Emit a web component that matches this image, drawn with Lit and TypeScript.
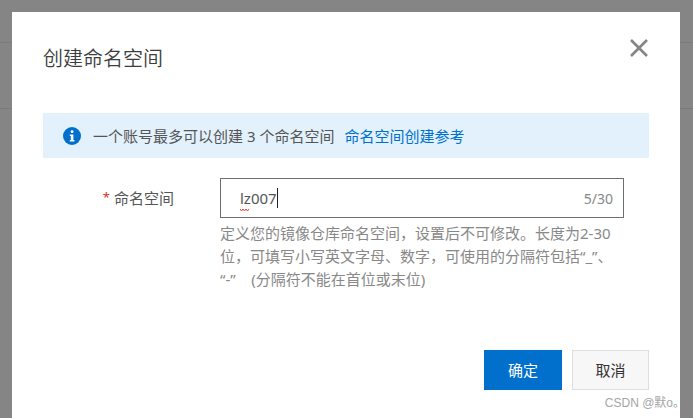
import { LitElement, html, css } from "lit";
import { customElement } from "lit/decorators.js";

@customElement("app-root")
export class AppRoot extends LitElement {
  static styles = css`
    :host {
      display: block;
      position: relative;
      width: 693px;
      height: 418px;
      overflow: hidden;
      background: #858585;
      font-family: "Noto Sans", "Noto Sans CJK SC", sans-serif;
    }
    .bg-head { height: 43px; box-sizing: border-box; border-bottom: 1px solid #7b7b7b; }
    .bg-sec { height: 66px; box-sizing: border-box; border-bottom: 1px solid #7b7b7b; }
    .modal {
      position: absolute;
      left: 12px;
      top: 12px;
      width: 668px;
      height: 406px;
      box-sizing: border-box;
      background: #fff;
      padding: 0 31px;
      display: flex;
      flex-direction: column;
    }
    .head {
      height: 101px;
      flex: none;
      display: flex;
      justify-content: space-between;
      align-items: flex-start;
    }
    .title {
      margin-top: 32px;
      font-size: 20px;
      line-height: 28px;
      color: #3d3d3d;
      font-family: "Noto Sans CJK SC", sans-serif;
      font-weight: 350;
    }
    .close { margin: 26px 0 0 0; width: 20px; height: 20px; display: block; }
    .alert {
      height: 45px;
      flex: none;
      background: #e3f1fd;
      display: flex;
      align-items: center;
      padding-left: 20px;
      font-size: 15px;
      color: #555;
      white-space: nowrap;
    }
    .info { width: 18px; height: 18px; margin-right: 12px; flex: none; }
    .link { color: #0070cc; margin-left: 10px; }
    .form {
      display: flex;
      margin-top: 20px;
      flex: none;
    }
    .label {
      width: 177px;
      height: 38px;
      flex: none;
      box-sizing: border-box;
      display: flex;
      align-items: center;
      justify-content: flex-end;
      padding-right: 46px;
      font-size: 15px;
      color: #555;
    }
    .req { color: #d93026; margin-right: 4px; font-size: 13px; }
    .field { width: 404px; }
    .input {
      height: 40px;
      box-sizing: border-box;
      border: 1px solid #6f6f6f;
      display: flex;
      align-items: center;
      justify-content: space-between;
      padding: 0 10px 0 19px;
      font-size: 15px;
      color: #555;
    }
    .value { position: relative; display: flex; align-items: center; }
    .caret { width: 1px; height: 20px; background: #222; margin-left: 0; }
    .squiggle { position: absolute; left: 0; top: 20px; width: 9px; height: 4px; }
    .count { color: #888; font-size: 14px; }
    .hint {
      margin-top: 4px;
      font-size: 15px;
      line-height: 23px;
      color: #888;
      width: 404px;
    }
    .foot {
      margin-top: auto;
      margin-bottom: 28px;
      display: flex;
      justify-content: flex-end;
      gap: 10px;
    }
    .btn {
      height: 40px;
      box-sizing: border-box;
      display: flex;
      align-items: center;
      justify-content: center;
      padding-bottom: 2px;
      font-size: 15px;
      font-family: "Noto Sans CJK SC", sans-serif;
    }
    .primary { width: 78px; background: #0070cc; color: #fff; }
    .secondary { width: 77px; background: #f7f7f7; border: 1px solid #dedede; color: #333; }
    .mark {
      position: absolute;
      right: 8px;
      bottom: 7px;
      font-size: 12px;
      line-height: 16px;
      color: #a6a6a6;
      font-family: "Liberation Sans", "Noto Sans CJK SC", sans-serif;
    }
  `;

  render() {
    return html`
      <div class="bg-head"></div>
      <div class="bg-sec"></div>
      <div class="modal">
        <div class="head">
          <div class="title">创建命名空间</div>
          <svg class="close" viewBox="0 0 20 20" fill="none" stroke="#858585" stroke-width="2.6">
            <path d="M2 2 L18 18 M18 2 L2 18" />
          </svg>
        </div>
        <div class="alert">
          <svg class="info" viewBox="0 0 18 18">
            <circle cx="9" cy="9" r="9" fill="#0070cc" />
            <rect x="7.7" y="3.2" width="2.8" height="2.8" rx="1.2" fill="#fff" />
            <path d="M6.8 7.4 H10.4 V13 H11.4 V14.6 H6.8 V13 H7.8 V9 H6.8 Z" fill="#fff" />
          </svg>
          <span>一个账号最多可以创建 3 个命名空间</span>
          <span class="link">命名空间创建参考</span>
        </div>
        <div class="form">
          <div class="label"><span class="req">*</span>命名空间</div>
          <div class="field">
            <div class="input">
              <span class="value">
                lz007<span class="caret"></span>
                <svg class="squiggle" viewBox="0 0 9 4" fill="none" stroke="#e0443a" stroke-width="1">
                  <path d="M0 1 L1.5 3 L3 1 L4.5 3 L6 1 L7.5 3 L9 1" />
                </svg>
              </span>
              <span class="count">5/30</span>
            </div>
            <div class="hint">定义您的镜像仓库命名空间，设置后不可修改。长度为2-30位，可填写小写英文字母、数字，可使用的分隔符包括“_”、<wbr />“-”&nbsp;&nbsp;&nbsp;&nbsp;(分隔符不能在首位或末位)</div>
          </div>
        </div>
        <div class="foot">
          <div class="btn primary">确定</div>
          <div class="btn secondary">取消</div>
        </div>
      </div>
      <div class="mark">CSDN @默o。</div>
    `;
  }
}
